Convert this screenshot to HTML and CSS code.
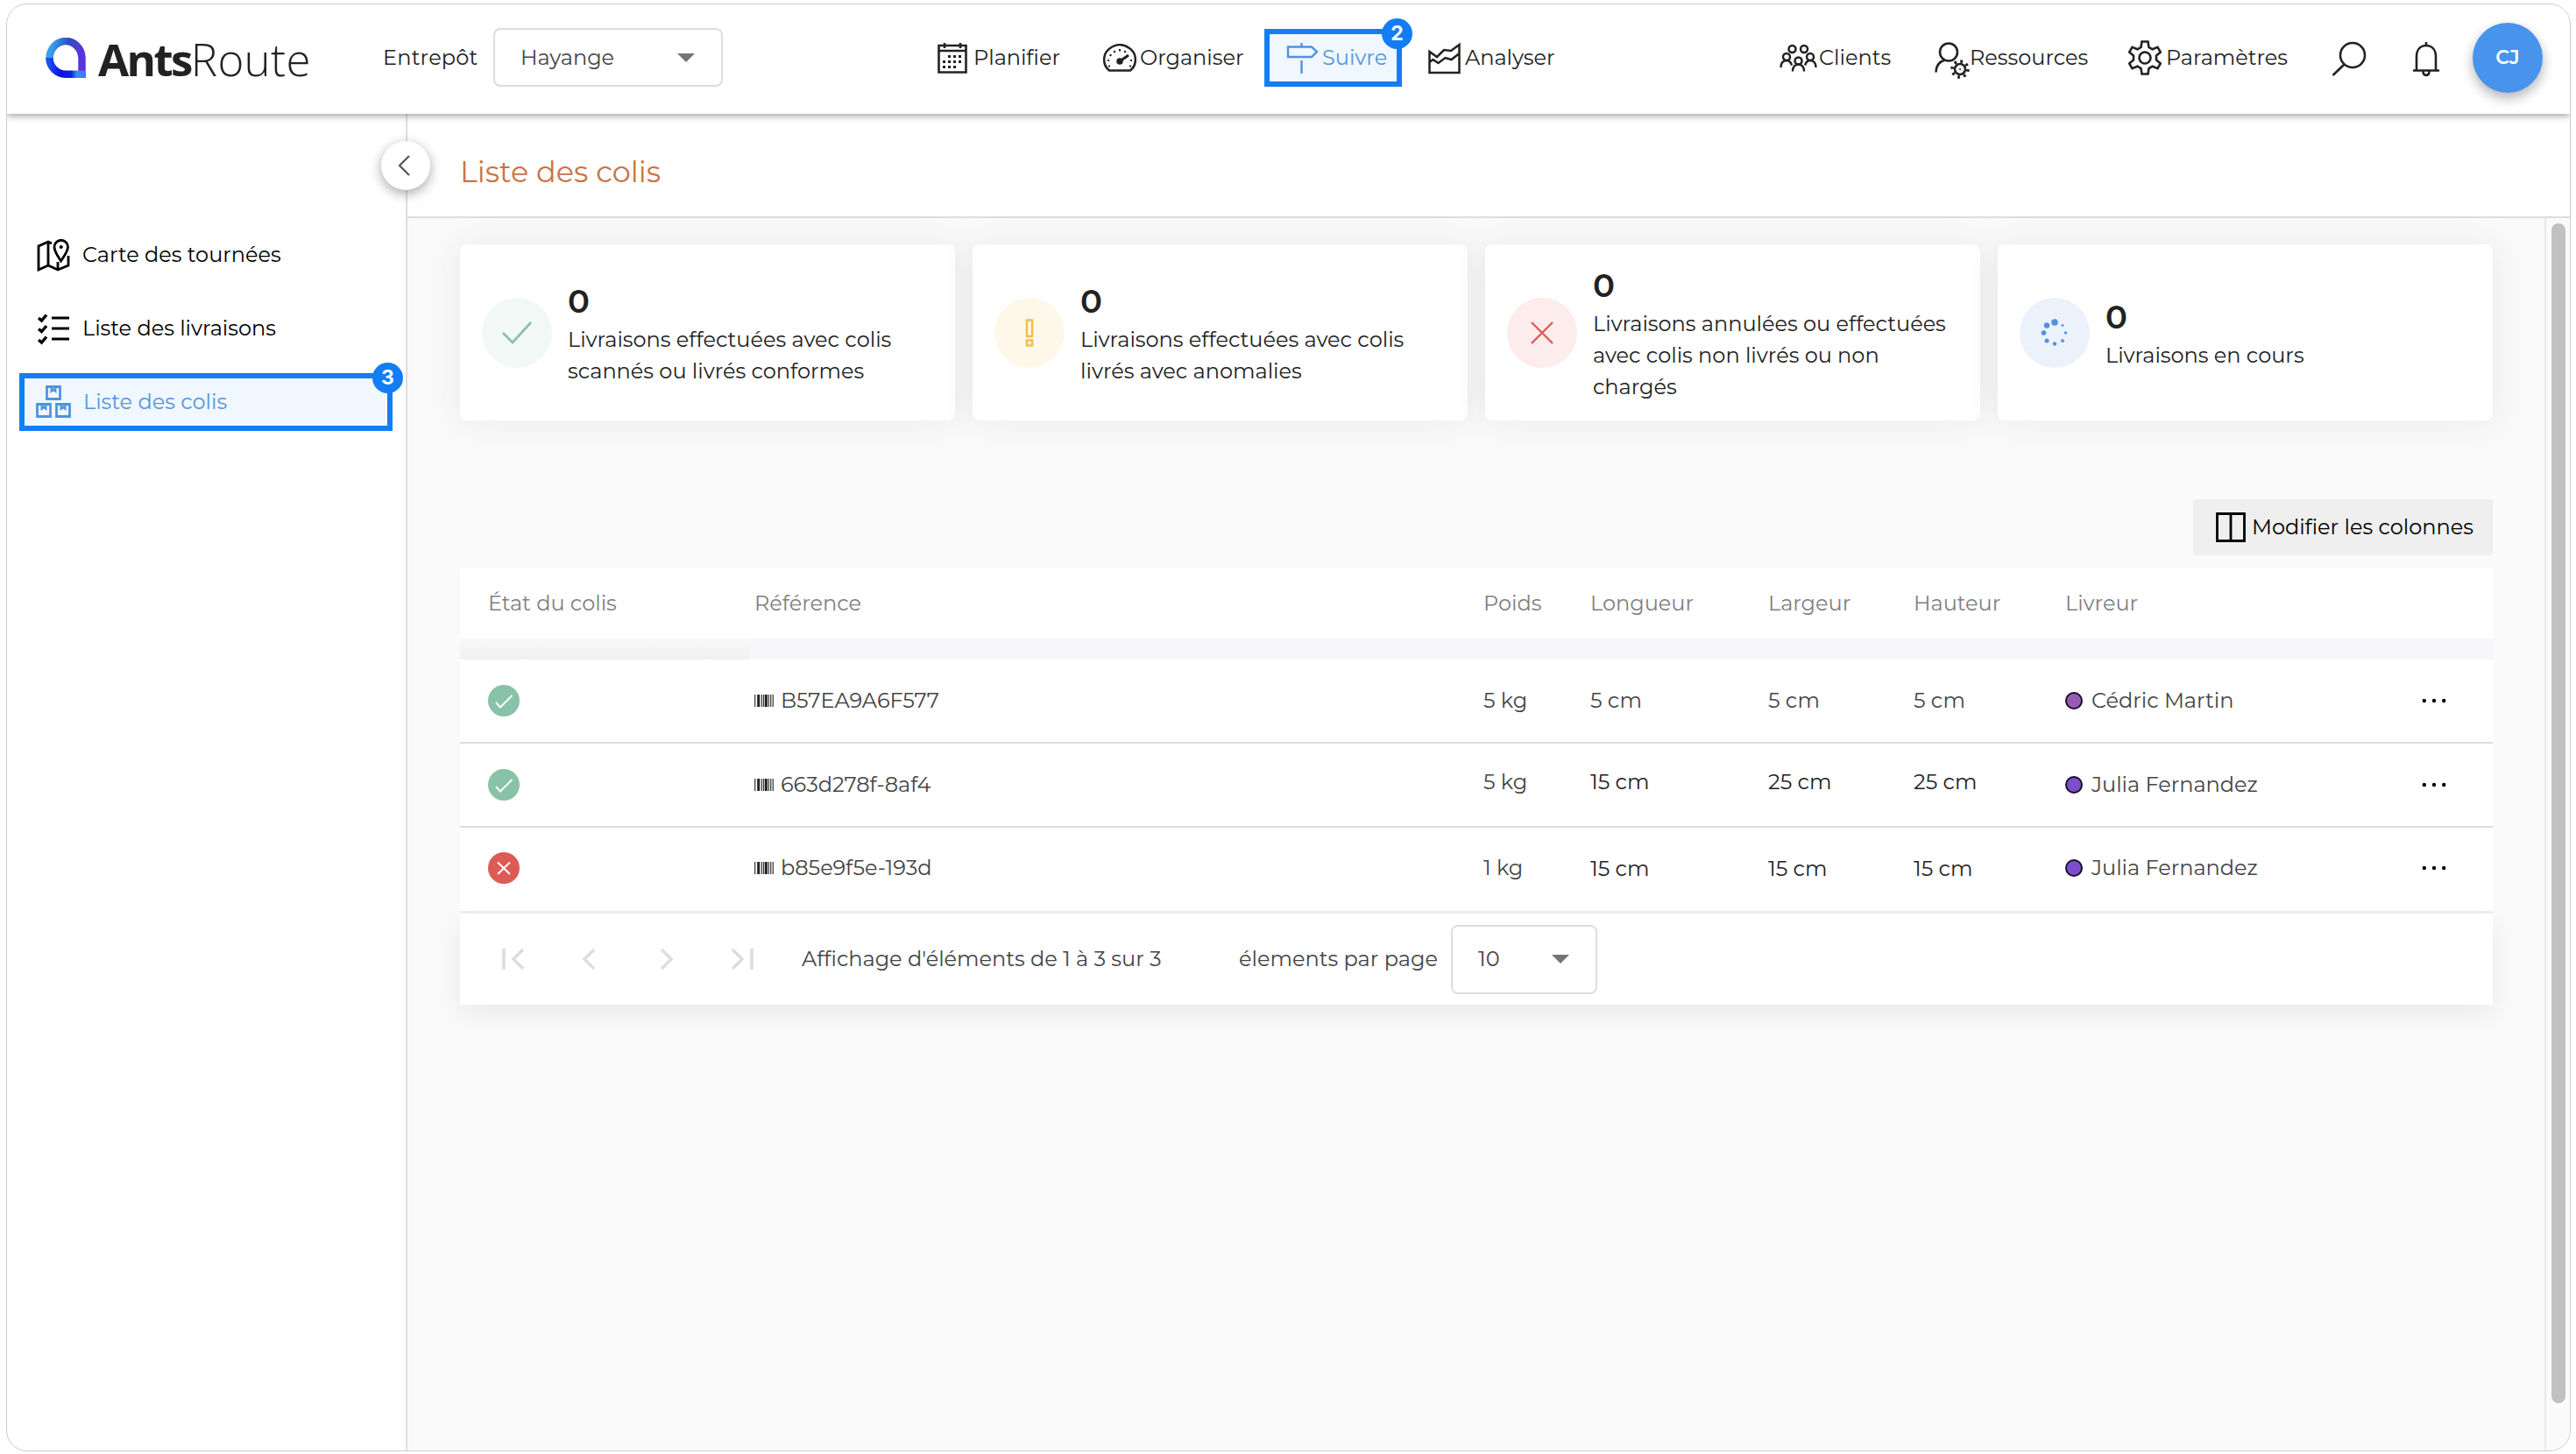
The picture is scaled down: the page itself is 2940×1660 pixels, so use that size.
FILE: index.html
```html
<!DOCTYPE html>
<html lang="fr">
<head>
  <meta charset="UTF-8">
  <meta name="viewport" content="width=device-width, initial-scale=1">
  <title>AntsRoute - Liste des colis</title>
  <link rel="stylesheet" href="styles.css">
</head>
<body>
  <!-- Symboles réutilisés -->
  <svg width="0" height="0" class="defs">
    <symbol id="barcode" viewBox="0 0 22 14"><path d="M.7 0v14M8.300 0v14M10.500 0v14M16.300 0v14M18.700 0v14M21.200 0v14" stroke="#333" stroke-width="1.200"/><path d="M4.700 0v14M13.300 0v14" stroke="#222" stroke-width="3"/></symbol>
    <symbol id="okBadge" viewBox="0 0 36 36"><circle cx="18" cy="18" r="18" fill="#88c2a7"/><path d="M9 20l5 5.500L27.500 12" fill="none" stroke="#fff" stroke-width="2"/></symbol>
    <symbol id="koBadge" viewBox="0 0 36 36"><circle cx="18" cy="18" r="18" fill="#dc5b55"/><path d="M11 11.500l14 13.500M25 11.500L11 25" fill="none" stroke="#fff" stroke-width="2"/></symbol>
    <symbol id="more" viewBox="0 0 28 6"><circle cx="2.800" cy="3" r="2.200"/><circle cx="14" cy="3" r="2.200"/><circle cx="25.200" cy="3" r="2.200"/></symbol>
    <symbol id="parcel" viewBox="0 0 18 17"><path d="M1.500 1.500h15v14h-15z" fill="none" stroke="#4f93e0" stroke-width="2.800"/><path d="M5.500 2v7L9 6.500l3.500 2.500V2h-2v2L9 3 7.500 4V2z" fill="#4f93e0"/></symbol>
  </svg>

  <div class="app">
    <header class="topbar">
      <div class="logo">
        <svg width="46" height="46" viewBox="0 0 46 46">
          <defs>
            <linearGradient id="lg" x1="0" y1=".4" x2="1" y2=".6"><stop offset="0" stop-color="#39a0ee"/><stop offset=".5" stop-color="#2c4fc0"/><stop offset="1" stop-color="#5f33dd"/></linearGradient>
            <linearGradient id="lg2" x1="0" y1="0" x2="1" y2="0"><stop offset="0" stop-color="#1a4df0"/><stop offset=".3" stop-color="#1010e0"/><stop offset=".6" stop-color="#1020e0"/><stop offset=".75" stop-color="#3a8cf5"/><stop offset="1" stop-color="#4a6cf0"/></linearGradient>
          </defs>
          <path d="M4.500 25a18.500 20 0 0 1 37-2v19" fill="none" stroke="url(#lg)" stroke-width="8.500"/>
          <path d="M4.500 23a18.500 18.700 0 0 0 18.500 18.700h23" fill="none" stroke="url(#lg2)" stroke-width="8.500"/>
        </svg>
        <span class="brand"><b>Ants</b><span class="light">Route</span></span>
      </div>

      <div class="depot">
        <span class="depot-label">Entrepôt</span>
        <div class="select depot-select"><span>Hayange</span><i class="caret"></i></div>
      </div>

      <nav class="nav">
        <a class="nav-item planifier">
          <svg width="34" height="36" viewBox="0 0 34 36" fill="none" stroke="#222" stroke-width="2.600"><path d="M1.500 4h31v30.500h-31zM1.500 10h31M8 1v6M26 1v6"/><path d="M12 16.500h17M6 22.500h23M6 28.500h17" stroke-width="3" stroke-dasharray="3 3"/></svg>
          <span>Planifier</span>
        </a>
        <a class="nav-item organiser">
          <svg width="38" height="32" viewBox="0 0 38 32" fill="none" stroke="#222" stroke-width="2.500"><path d="M7 30.500C-1 24-1 11 8 5c7-5 15-5 22 0 9 6 9 19 1 25.500z"/><circle cx="19" cy="20" r="2.500" fill="#222"/><path d="M19 20l10-7" stroke-width="3"/><path d="M6 25.500h2M5 19h2M7.500 12.500l2 1M12.500 8l1 2M19 6v2.500M25.500 8l-1 2M31 19h2M30 25.500h2" stroke-width="2.200"/></svg>
          <span>Organiser</span>
        </a>
        <a class="nav-item suivre active">
          <svg width="37" height="36" viewBox="0 0 37 36" fill="none" stroke="#4f93e0" stroke-width="2.400"><path d="M2 5.500h27l6 5.500-6 6H2zM17.500 1v4M17.500 21v15"/></svg>
          <span>Suivre</span>
          <span class="step">2</span>
        </a>
        <a class="nav-item analyser">
          <svg width="37" height="38" viewBox="0 0 37 38" fill="none" stroke="#222" stroke-width="2.500"><path d="M1.500 12v24h34V4L26 11l-8-1-8 8zM1.500 24l4-3 6 4 8-6 7 2 9-7"/></svg>
          <span>Analyser</span>
        </a>
      </nav>

      <nav class="nav nav-right">
        <a class="nav-item clients">
          <svg width="43" height="32" viewBox="0 0 43 32" fill="none" stroke="#222" stroke-width="2.500"><circle cx="14.500" cy="6" r="4"/><circle cx="28" cy="6" r="4"/><circle cx="8" cy="15" r="4"/><circle cx="35" cy="15" r="4"/><circle cx="21.500" cy="19.500" r="4"/><path d="M1.500 27c0-5 2.500-8 6.500-8s5 2.500 6 5.500M41.500 27c0-5-2.500-8-6.500-8s-5 2.500-6 5.500M15 31.500c0-5 2.500-8 6.500-8s6.500 3 6.500 8"/></svg>
          <span>Clients</span>
        </a>
        <a class="nav-item ressources">
          <svg width="40" height="42" viewBox="0 0 40 42" fill="none" stroke="#222" stroke-width="2.600"><circle cx="16" cy="11.500" r="10"/><path d="M1.500 34.500c0-7 4-12 10-14"/><circle cx="29" cy="31" r="6"/><circle cx="29" cy="31" r="1" fill="#222" stroke="none"/><circle cx="29" cy="31" r="9" stroke-width="3.500" stroke-dasharray="2.800 4.270"/></svg>
          <span>Ressources</span>
        </a>
        <a class="nav-item parametres">
          <svg width="38" height="40" viewBox="0 0 38 40" fill="none" stroke="#222" stroke-width="2.600"><circle cx="19" cy="20" r="6.500"/><path d="M15.500 1.500h7l1 6.500 4 2.300 6-2.500 3.300 5.700-4.800 4v5l4.800 4-3.300 5.700-6-2.500-4 2.300-1 6.500h-7l-1-6.500-4-2.300-6 2.500L1.200 26.500l4.800-4v-5l-4.800-4 3.300-5.700 6 2.500 4-2.300z"/></svg>
          <span>Paramètres</span>
        </a>
        <a class="nav-icon search">
          <svg width="40" height="40" viewBox="0 0 40 40" fill="none" stroke="#222" stroke-width="2.600"><circle cx="24" cy="16" r="14"/><path d="M14.500 26.500L1.500 39"/></svg>
        </a>
        <a class="nav-icon bell">
          <svg width="32" height="40" viewBox="0 0 32 40" fill="none" stroke="#222" stroke-width="2.600"><path d="M1 32.500h30M5 32V17C5 8 10 4 16 4s11 4 11 13v15M16 0v4M12.500 33c0 6.500 7 6.500 7 0"/></svg>
        </a>
        <span class="avatar">CJ</span>
      </nav>
    </header>

    <div class="layout">
      <aside class="sidebar">
        <a class="side-item">
          <svg width="38" height="38" viewBox="0 0 38 38" fill="none" stroke="#000" stroke-width="2.800"><path d="M17 6l-4-2L2 9v27l11-5 11 5 12-5V20M13 4v27M24 36v-9"/><path d="M27.500 26C23 19 20 15 20 10a7.500 7.500 0 0 1 15.500 0c0 5-3.500 9-8 16z"/><circle cx="27.700" cy="10" r="1.600" fill="#000" stroke-width="1"/></svg>
          <span>Carte des tournées</span>
        </a>
        <a class="side-item">
          <svg width="38" height="38" viewBox="0 0 38 38" fill="none" stroke="#000" stroke-width="3"><path d="M17 7h20M17 19h20M17 31h20"/><path d="M2 7l3.500 3L11 3.500M2 19.500l3.500 3L11 16M2 32l3.500 3L11 28.500" stroke-width="3.400"/></svg>
          <span>Liste des livraisons</span>
        </a>
        <a class="side-item active">
          <svg width="40" height="38" viewBox="0 0 40 38"><use href="#parcel" x="11" y="0" width="18" height="17"/><use href="#parcel" x="0" y="20" width="18" height="17"/><use href="#parcel" x="22" y="20" width="18" height="17"/></svg>
          <span>Liste des colis</span>
          <span class="step">3</span>
        </a>
        <button class="collapse" aria-label="Réduire">
          <svg width="14" height="24" viewBox="0 0 14 24" fill="none" stroke="#555" stroke-width="2.200"><path d="M13 1L2 12l11 11"/></svg>
        </button>
      </aside>

      <main class="main">
        <div class="page-head"><h1>Liste des colis</h1></div>
        <div class="scroll">
          <div class="content">

            <section class="cards">
              <div class="card">
                <div class="round green"><svg width="36" height="26" viewBox="0 0 36 26" fill="none" stroke="#88c2a7" stroke-width="2.600"><path d="M2 13l11 11L34 1"/></svg></div>
                <div><p class="count">0</p><p class="label">Livraisons effectuées avec colis<br>scannés ou livrés conformes</p></div>
              </div>
              <div class="card">
                <div class="round yellow"><svg width="10" height="32" viewBox="0 0 10 32" fill="none" stroke="#efc14e" stroke-width="2.600"><path d="M2 1.500h6v18.500H2zM2 24.500h6v6H2z"/></svg></div>
                <div><p class="count">0</p><p class="label">Livraisons effectuées avec colis<br>livrés avec anomalies</p></div>
              </div>
              <div class="card">
                <div class="round red"><svg width="26" height="26" viewBox="0 0 26 26" fill="none" stroke="#dc5b55" stroke-width="2.400"><path d="M1 1l24 24M25 1L1 25"/></svg></div>
                <div><p class="count">0</p><p class="label">Livraisons annulées ou effectuées<br>avec colis non livrés ou non<br>chargés</p></div>
              </div>
              <div class="card">
                <div class="round blue"><svg width="32" height="32" viewBox="0 0 32 32" fill="#4f93e0"><circle cx="16" cy="4" r="3.800"/><circle cx="7" cy="7.500" r="3.200"/><circle cx="3.500" cy="16" r="2.800"/><circle cx="7" cy="25" r="2.500"/><circle cx="16" cy="28.500" r="2.200"/><circle cx="25" cy="25" r="1.900"/><circle cx="28.500" cy="16" r="1.700"/><circle cx="25" cy="7.500" r="1.400"/></svg></div>
                <div><p class="count">0</p><p class="label">Livraisons en cours</p></div>
              </div>
            </section>

            <div class="toolbar">
              <button class="columns-btn">
                <svg width="34" height="34" viewBox="0 0 34 34" fill="none" stroke="#000" stroke-width="2.800"><path d="M1.500 1.500h31v31h-31zM17 1.500v31"/></svg>
                <span>Modifier les colonnes</span>
              </button>
            </div>

            <section class="table">
              <div class="row head">
                <span>État du colis</span><span>Référence</span><span>Poids</span><span>Longueur</span><span>Largeur</span><span>Hauteur</span><span>Livreur</span><span></span>
              </div>
              <div class="band"></div>
              <div class="row">
                <svg class="status"><use href="#okBadge"/></svg>
                <span class="ref"><svg class="bar"><use href="#barcode"/></svg>B57EA9A6F577</span>
                <span>5 kg</span><span>5 cm</span><span>5 cm</span><span>5 cm</span>
                <span class="driver"><i class="dot purple"></i>Cédric Martin</span>
                <svg class="more"><use href="#more"/></svg>
              </div>
              <div class="row">
                <svg class="status"><use href="#okBadge"/></svg>
                <span class="ref"><svg class="bar"><use href="#barcode"/></svg>663d278f-8af4</span>
                <span class="up">5 kg</span><span class="up dark">15 cm</span><span class="up dark">25 cm</span><span class="up dark">25 cm</span>
                <span class="driver"><i class="dot"></i>Julia Fernandez</span>
                <svg class="more"><use href="#more"/></svg>
              </div>
              <div class="row last">
                <svg class="status"><use href="#koBadge"/></svg>
                <span class="ref"><svg class="bar"><use href="#barcode"/></svg>b85e9f5e-193d</span>
                <span>1 kg</span><span class="dark">15 cm</span><span class="dark">15 cm</span><span class="dark">15 cm</span>
                <span class="driver"><i class="dot"></i>Julia Fernandez</span>
                <svg class="more"><use href="#more"/></svg>
              </div>
              <div class="pager">
                <svg width="288" height="26" viewBox="0 0 288 26" fill="none" stroke="#ddd" stroke-width="3.600"><path d="M2 1v24M24 2L13 13l11 11M105 2L94 13l11 11M182 2l11 11-11 11M263 2l11 11-11 11M285 1v24"/></svg>
                <span class="pager-info">Affichage d'éléments de 1 à 3 sur 3</span>
                <span class="pager-size">élements par page</span>
                <div class="select size-select"><span>10</span><i class="caret"></i></div>
              </div>
            </section>
          </div>
          <div class="scrollbar"><div class="thumb"></div></div>
        </div>
      </main>
    </div>
  </div>
</body>
</html>
```
FILE: styles.css
```css
:root {
  --blue: #147df5;
  --link: #5596de;
  --text: #222;
  --line: #ddd;
}
* {box-sizing:border-box;margin:0;padding:0;}
body {background:#fff;color:var(--text);font-family:'Montserrat','Inter',sans-serif;font-size:24px;line-height:36px;white-space:nowrap;}
svg {display:block;flex:none;}
.defs {position:absolute;}
button {font:inherit;border:none;}

.app {width:2927px;height:1653px;margin:4px 0 0 7px;border:1px solid #ccc;border-radius:24px;overflow:hidden;background:#fff;display:flex;flex-direction:column;}

/* barre du haut */
.topbar {height:125px;flex:none;display:flex;align-items:center;padding:0 30px 4px 44px;box-shadow:0 2px 8px rgba(0,0,0,.4);position:relative;z-index:3;background:#fff;}
.logo {width:385px;display:flex;align-items:center;gap:14px;}
.brand {font-family:'Open Sans',sans-serif;font-size:51px;line-height:50px;padding-top:3px;display:flex;}
.brand b {font-weight:700;letter-spacing:-2.600px;}
.brand .light {font-weight:300;letter-spacing:.3px;}
.depot {display:flex;align-items:center;width:633px;}
.depot-label {width:126px;letter-spacing:.2px;}
.select {border:2px solid var(--line);border-radius:8px;display:flex;align-items:center;justify-content:space-between;padding:0 30px 0 29px;color:#444;}
.depot-select {width:262px;height:67px;}
.caret {border:10px solid transparent;border-top-color:#757575;border-bottom:0;}
.nav {display:flex;align-items:center;}
.nav-item {display:flex;align-items:center;}
.planifier {width:189px;gap:7px;}
.organiser {width:184px;gap:4px;}
.suivre {width:157px;height:66px;border:6px solid var(--blue);background:#f0f7fe;color:var(--link);padding-left:19px;gap:4px;position:relative;margin-right:30px;}
.analyser {width:401px;gap:5px;}
.clients {width:177px;gap:2px;}
.ressources {width:221px;}
.ressources svg {margin-top:7px;}
.parametres {width:232px;gap:5px;}
.search {width:92px;padding-top:3px;}
.bell {width:69px;padding-top:4px;}
.avatar {width:80px;height:80px;border-radius:50%;background:#4894ec;color:#fff;font-weight:600;font-size:22px;display:flex;align-items:center;justify-content:center;box-shadow:0 6px 14px rgba(0,0,0,.3);}
.step {position:absolute;width:35px;height:35px;border-radius:50%;background:var(--blue);color:#fff;font-family:'Inter',sans-serif;font-weight:700;font-size:23px;line-height:35px;text-align:center;}
.suivre .step {right:-18px;top:-18px;}

/* menu gauche */
.layout {flex:1;display:flex;min-height:0;}
.sidebar {width:457px;flex:none;border-right:2px solid var(--line);padding:128px 15px 0 14px;display:flex;flex-direction:column;gap:18px;position:relative;z-index:2;color:#000;}
.side-item {height:66px;display:flex;align-items:center;gap:14px;padding:0 0 1px 20px;position:relative;}
.side-item.active {border:6px solid var(--blue);background:#f0f7fe;color:var(--link);padding:0 0 1px 13px;gap:14px;}
.side-item .step {right:-18px;top:-18px;}
.collapse {position:absolute;right:-28px;top:31px;width:56px;height:56px;border-radius:50%;background:#fff;display:flex;align-items:center;justify-content:center;padding-right:4px;box-shadow:0 4px 14px rgba(0,0,0,.35);}

.main {flex:1;display:flex;flex-direction:column;min-width:0;}
.page-head {height:119px;border-bottom:2px solid var(--line);padding:15px 0 0 60px;display:flex;align-items:center;}
h1 {font-size:33.500px;font-weight:400;color:#cb7344;}
.scroll {flex:1;display:flex;background:#fafafa;}
.content {flex:1;padding:30px 59px 0 60px;}
.scrollbar {width:29px;border-left:2px solid #e8e8e8;padding:6px 0 0 6px;}
.thumb {width:16px;height:1347px;border-radius:8px;background:#c1c1c1;}

/* cartes */
.cards {display:grid;grid-template-columns:repeat(4,1fr);gap:20px;}
.card {height:201px;background:#fff;border-radius:8px;display:flex;align-items:center;gap:18px;padding-left:25px;box-shadow:0 0 40px rgba(60,60,80,.09);}
.round {width:80px;height:80px;border-radius:50%;display:flex;align-items:center;justify-content:center;flex:none;}
.green {background:#f1f8f6;}
.yellow {background:#fdf8ea;}
.red {background:#fceceb;}
.blue {background:#ebf2fb;}
.count {font-size:37px;font-weight:600;line-height:53px;}
.label {line-height:36px;}

.toolbar {display:flex;justify-content:flex-end;margin:90px 0 15px;}
.columns-btn {width:342px;height:64px;background:#efefef;border-radius:4px;display:flex;align-items:center;gap:7px;padding-left:26px;color:#000;}

/* tableau */
.row {display:grid;grid-template-columns:304px 832px 122px 203px 166px 173px 407px 1fr;align-items:center;height:96px;padding:0 0 1px 32px;background:#fff;border-bottom:2px solid var(--line);color:#444;}
.row.head {height:80px;padding-bottom:0;border:none;color:#808080;}
.row.last {height:98px;padding-bottom:3px;border-bottom:3px solid #f0f0f0;}
.band {height:24px;background:linear-gradient(90deg,transparent 330px,#f7f7f9 330px),linear-gradient(#f8f8f8,#f1f1f1);}
.status {width:36px;height:36px;}
.ref {display:flex;align-items:center;gap:8px;}
.bar {width:22px;height:14px;}
.up {padding-bottom:5px;}
.dark {color:#222;}
.last .dark {padding-top:1px;}
.driver {display:flex;align-items:center;gap:10px;}
.dot {width:20px;height:20px;border-radius:50%;border:2px solid #15102a;background:#7c4dcc;}
.dot.purple {background:#9b59b6;}
.more {width:28px;height:6px;}
.pager {height:104px;background:#fff;display:flex;align-items:center;padding-left:48px;color:#444;box-shadow:0 10px 30px rgba(0,0,0,.07);}
.pager-info {margin-left:54px;width:499px;}
.pager-size {width:242px;}
.size-select {width:167px;height:79px;}
```
